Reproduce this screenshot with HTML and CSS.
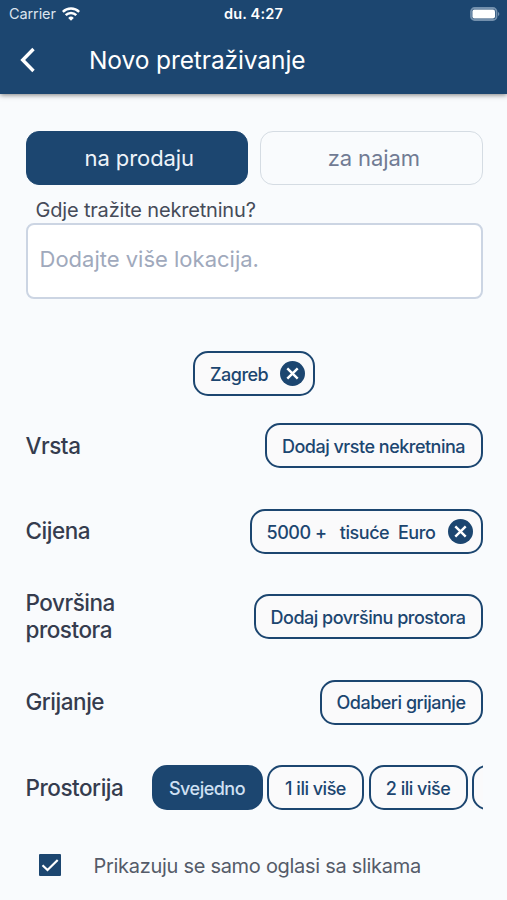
FILE: index.html
```html
<!DOCTYPE html>
<html lang="hr">
<head>
    <meta charset="UTF-8">
    <meta name="viewport" content="width=device-width, initial-scale=1.0">
    <title>Novo pretraživanje</title>
    <link rel="stylesheet" href="styles.css">
</head>
<body>

<header class="header">
    <div class="status-bar">
        <div class="carrier">
            <span>Carrier</span>
            <svg width="18" height="14" viewBox="0 0 18 14" fill="none" stroke="#fff" stroke-width="2.5">
                <path d="M.8 4.9a11.6 11.6 0 0 1 16.4 0"/>
                <path d="M3.7 8.1a7.5 7.5 0 0 1 10.6 0"/>
                <path d="M9 13.8L6.2 10.9a4 4 0 0 1 5.6 0z" fill="#fff" stroke="none"/>
            </svg>
        </div>
        <div class="time">du. 4:27</div>
        <svg class="battery" width="31" height="14" viewBox="0 0 31 14">
            <rect x="2" y="1" width="25.5" height="12" rx="3.6" fill="none" stroke="#7390ad" stroke-width="1.8"/>
            <rect x="3.4" y="2.5" width="22.6" height="9" rx="2" fill="#fff"/>
            <path d="M29 5c1.8.8 1.8 3.2 0 4z" fill="#7390ad"/>
        </svg>
    </div>
    <div class="title-bar">
        <svg class="back" width="16" height="26" viewBox="0 0 16 26" fill="none" stroke="#fff" stroke-width="3.4">
            <path d="M13.5 2L2.7 13l10.8 11"/>
        </svg>
        <h1>Novo pretraživanje</h1>
    </div>
</header>

<main class="search-form">
    <div class="tabs">
        <button class="tab active">na prodaju</button>
        <button class="tab">za najam</button>
    </div>

    <label class="location-label" for="location">Gdje tražite nekretninu?</label>
    <input class="location" id="location" type="text" placeholder="Dodajte više lokacija.">

    <div class="selected">
        <button class="chip closable zagreb">
            <span>Zagreb</span>
            <svg class="close" viewBox="0 0 24 24"><circle cx="12" cy="12" r="12"/><path d="M7 7l10 10M17 7L7 17"/></svg>
        </button>
    </div>

    <div class="row">
        <h2>Vrsta</h2>
        <button class="chip type">Dodaj vrste nekretnina</button>
    </div>
    <div class="row">
        <h2>Cijena</h2>
        <button class="chip closable price">
            <span>5000 +&nbsp;&nbsp; tisuće&nbsp; Euro</span>
            <svg class="close" viewBox="0 0 24 24"><circle cx="12" cy="12" r="12"/><path d="M7 7l10 10M17 7L7 17"/></svg>
        </button>
    </div>
    <div class="row">
        <h2>Površina<br>prostora</h2>
        <button class="chip area">Dodaj površinu prostora</button>
    </div>
    <div class="row">
        <h2>Grijanje</h2>
        <button class="chip heating">Odaberi grijanje</button>
    </div>
    <div class="row">
        <h2>Prostorija</h2>
        <div class="rooms">
            <button class="chip filled any">Svejedno</button>
            <button class="chip one">1 ili više</button>
            <button class="chip two">2 ili više</button>
            <button class="chip three"></button>
        </div>
    </div>

    <label class="only-photos">
        <input type="checkbox" checked>
        <svg class="check" viewBox="0 0 22 22"><rect width="22" height="22" rx="1"/><path d="M3.5 11.2l5 4.8L18.7 6"/></svg>
        <span>Prikazuju se samo oglasi sa slikama</span>
    </label>
</main>

</body>
</html>
```
FILE: styles.css
```css
* {
    box-sizing: border-box;
}

body {
    margin: 0;
    height: 900px;
    overflow: hidden;
    background-color: #f9fbfd;
    font-family: Inter, sans-serif;
    color: #353c4e;
}

button, input {
    font-family: inherit;
}

.header {
    height: 94px;
    background-color: #1c4670;
    color: white;
    box-shadow: 0 1px 5px rgba(0,0,0,0.5);
}

.status-bar {
    display: grid;
    grid-template-columns: 1fr auto 1fr;
    align-items: center;
    height: 27px;
    padding: 0 7px 0 9px;
    font-size: 14.5px;
}

.carrier {
    display: flex;
    align-items: center;
    gap: 6px;
    color: #dbe4ee;
    letter-spacing: -0.1px;
}

.time {
    margin-left: -2px;
    font-weight: 600;
    letter-spacing: 0.15px;
}

.battery {
    justify-self: end;
}

.title-bar {
    display: flex;
    align-items: center;
    height: 66px;
    padding-left: 20px;
}

.title-bar h1 {
    margin: 0 0 0 53px;
    font-size: 24.5px;
    font-weight: 400;
    letter-spacing: -0.1px;
}

.search-form {
    padding: 37px 24.5px 0 25.5px;
}

.tabs {
    display: flex;
    gap: 12px;
}

.tab {
    flex: 1;
    height: 54px;
    padding: 0 0 1px 5px;
    border: 1px solid #d5dce3;
    border-radius: 13px;
    background-color: transparent;
    color: #717b94;
    font-size: 22px;
    letter-spacing: -0.1px;
}

.tab.active {
    border-color: #1c4670;
    background-color: #1c4670;
    color: #edf3f9;
}

.location-label {
    display: block;
    height: 38px;
    padding: 6px 0 0 10px;
    line-height: 39px;
    font-size: 20px;
    letter-spacing: -0.18px;
    color: #454b59;
}

.location {
    display: block;
    width: 100%;
    height: 76px;
    padding: 0 12px 4px;
    border: 2px solid #ccd5e3;
    border-radius: 8px;
    background-color: white;
    font-size: 22px;
}

.location::placeholder {
    color: #a0a9bc;
}

.selected {
    display: flex;
    justify-content: center;
    margin-top: 52px;
}

.chip {
    flex: none;
    display: flex;
    align-items: center;
    justify-content: center;
    height: 45px;
    padding: 1px 0 0;
    border: 2.5px solid #1c4670;
    border-radius: 15px;
    background-color: #fafafb;
    color: #1c4670;
    font-size: 18px;
    font-weight: 500;
    letter-spacing: -0.5px;
    white-space: nowrap;
}

.closable {
    justify-content: space-between;
    padding: 0 8px 0 15px;
}

.closable span {
    padding-top: 2px;
}

.close {
    width: 25px;
    height: 25px;
    fill: #1c4670;
}

.close path {
    stroke: white;
    stroke-width: 2.3;
}

.zagreb { width: 122px; }
.type { width: 218px; }
.price { width: 233px; }
.area { width: 229px; }
.heating { width: 163px; }
.any { width: 111px; }
.one { width: 97px; }
.two { width: 99px; }
.three { width: 99px; }

.price {
    letter-spacing: -0.44px;
}

.row {
    display: flex;
    align-items: center;
    justify-content: space-between;
    height: 85.5px;
}

.selected + .row {
    margin-top: 7px;
}

.row h2 {
    margin: 0;
    padding-bottom: 1px;
    font-size: 22.5px;
    line-height: 27px;
    font-weight: 500;
    letter-spacing: -0.47px;
}

.rooms {
    display: flex;
    gap: 4.5px;
    width: 331px;
    overflow: hidden;
}

.filled {
    background-color: #1c4670;
    color: #cfe0f3;
}

.only-photos {
    display: flex;
    align-items: center;
    margin: 21px 0 0 13px;
    font-size: 20px;
    letter-spacing: -0.29px;
    color: #555b69;
}

.only-photos input {
    display: none;
}

.only-photos span {
    margin-left: 33px;
    padding-top: 2px;
}

.check {
    width: 22px;
    height: 22px;
    fill: #1c4670;
}

.check path {
    fill: none;
    stroke: white;
    stroke-width: 2.2;
}
```
